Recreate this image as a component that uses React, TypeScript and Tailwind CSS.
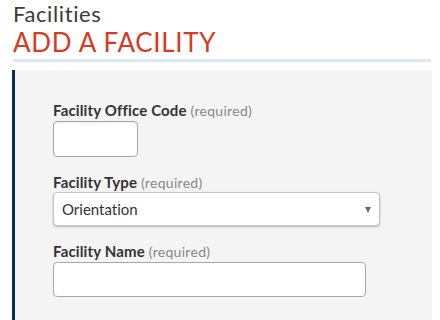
import React from "react";

function Label({ text, className }: { text: string; className: string }) {
  return (
    <label className={`block text-[15px] leading-[18px] font-bold text-[#333] tracking-[0.15px] ${className}`}>
      {text} <span className="text-[14px] leading-none font-normal text-[#888] tracking-[0.3px]">(required)</span>
    </label>
  );
}

export default function App() {
  return (
    <div className="w-[440px] h-[320px] overflow-hidden bg-white [font-variant-ligatures:none]" style={{ fontFamily: "Lato, 'Open Sans', sans-serif" }}>
      <div className="pl-[13px] pr-[9px]">
        <h2 className="text-[22px] leading-[27px] text-[#3a3a3a] tracking-[0.6px]">Facilities</h2>
        <h1 className="text-[26px] leading-[31px] text-[#d63a22] tracking-[0.7px]">ADD A FACILITY</h1>
        <div className="mt-[1px] h-[3px] bg-[#dce7f5]" />
      </div>
      <div className="mt-[8px] ml-[12px] mr-[8px] h-[260px] bg-[#f4f4f4] border-l-[3px] border-[#0e2d55] pl-[38px] pt-[31px]">
        <Label text="Facility Office Code" className="" />
        <div className="mt-[2px] w-[85px] h-[36px] bg-white border border-[#a8a8a8] rounded-[4px] shadow-[inset_0_1px_1px_rgba(0,0,0,0.08)]" />
        <Label text="Facility Type" className="mt-[16px]" />
        <div className="mt-[1px] w-[327px] h-[34px] bg-white border border-[#c4c4c4] rounded-[4px] shadow-[0_1px_2px_rgba(0,0,0,0.25)] flex items-center justify-between pl-[8px] pr-[8px]">
          <span className="text-[15px] text-[#333]">Orientation</span>
          <svg width="6" height="6" viewBox="0 0 6 6" className="mt-[1px]">
            <polygon points="0,0 6,0 3,6" fill="#5f6b7a" />
          </svg>
        </div>
        <Label text="Facility Name" className="mt-[16px]" />
        <div className="mt-[2px] w-[313px] h-[35px] bg-white border border-[#a8a8a8] rounded-[4px]" />
      </div>
    </div>
  );
}
